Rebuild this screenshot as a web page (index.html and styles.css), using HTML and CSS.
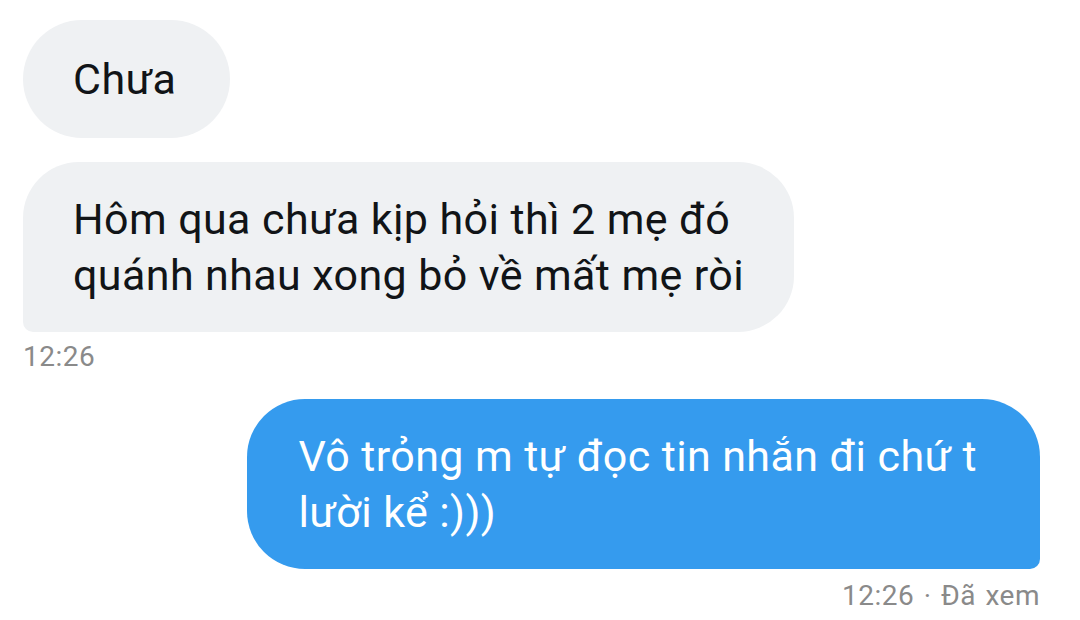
FILE: index.html
```html
<!DOCTYPE html>
<html lang="vi">
<head>
<meta charset="utf-8">
<link rel="stylesheet" href="styles.css">
</head>
<body>
<main class="thread">
  <div class="group received">
    <div class="bubble gray single">Chưa</div>
    <div class="bubble gray last">Hôm qua chưa kịp hỏi thì 2 mẹ đó<br>quánh nhau xong bỏ về mất mẹ ròi</div>
    <div class="meta">12:26</div>
  </div>
  <div class="group sent">
    <div class="bubble blue last">Vô trỏng m tự đọc tin nhắn đi chứ t<br>lười kể :)))</div>
    <div class="meta">12:26 · Đã xem</div>
  </div>
</main>
</body>
</html>
```
FILE: styles.css
```css
html, body {
  margin: 0;
  padding: 0;
  background: #ffffff;
}
body {
  width: 1080px;
  height: 620px;
  overflow: hidden;
  font-family: Roboto, "Noto Sans", sans-serif;
}
.thread {
  display: flex;
  flex-direction: column;
  padding: 20px 40px 0 23px;
  gap: 24px;
}
.group {
  display: flex;
  flex-direction: column;
  gap: 24px;
}
.received { align-items: flex-start; }
.sent { align-items: flex-end; gap: 0; }
.bubble {
  font-size: 43px;
  letter-spacing: 0.4px;
  line-height: 56px;
  padding: 31px 50px;
  color: #111417;
}
.gray {
  background: #eff1f3;
  border-radius: 56px 56px 56px 10px;
}
.gray.single {
  border-radius: 59px;
  padding: 31px 54px 31px 50px;
}
.gray.last { padding: 29px 50px 29px 50px; }
.blue {
  background: #359bee;
  color: #ffffff;
  border-radius: 58px 58px 10px 58px;
  padding: 29px 63px 29px 51px;
}
.meta {
  font-size: 28px;
  letter-spacing: 0.5px;
  word-spacing: 2px;
  line-height: 36px;
  color: #8a8a8a;
}
.received .meta { margin-top: -17px; }
.sent .meta { margin-top: 9px; }
```
